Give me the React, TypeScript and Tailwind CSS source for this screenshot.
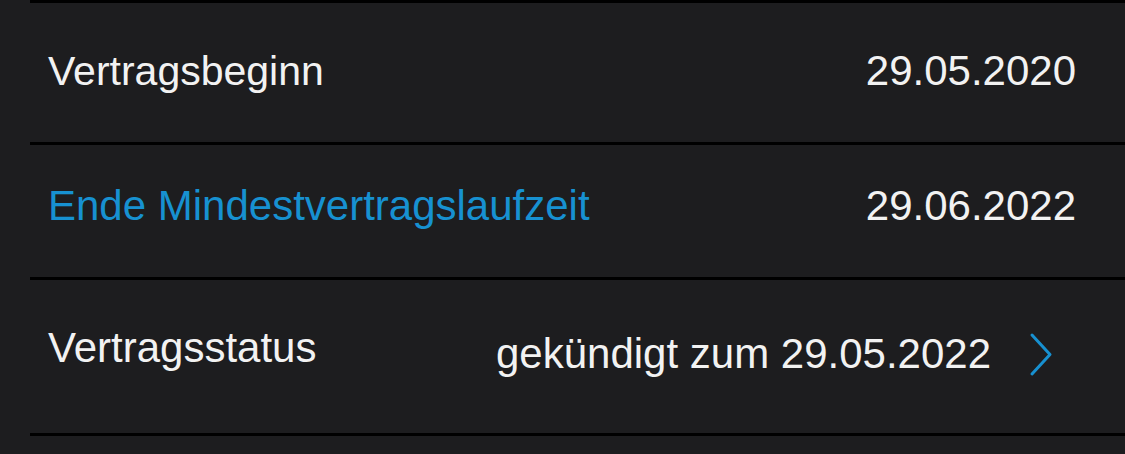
const font = { fontFamily: '"Liberation Sans", Arial, sans-serif' }

function Chevron() {
  return (
    <svg width="24" height="45" viewBox="0 0 24 45" fill="none" className="shrink-0">
      <path d="M3 3 L21 22.5 L3 42" stroke="#1790d0" strokeWidth="3" strokeLinecap="round" strokeLinejoin="round" />
    </svg>
  )
}

export default function App() {
  return (
    <div className="h-[454px] w-[1125px] overflow-hidden bg-[#1d1d1f] pl-[30px]" style={font}>
      <div className="border-t-[3px] border-black text-[42px] leading-[48px] text-[#f2f2f2]">
        <div className="flex h-[142px] items-center justify-between border-b-[3px] border-black pb-[4px] pl-[18px] pr-[49px]">
          <span className="text-[41px]">Vertragsbeginn</span>
          <span>29.05.2020</span>
        </div>
        <div className="flex h-[135px] items-center justify-between border-b-[3px] border-black pb-[10px] pl-[18px] pr-[49px]">
          <span className="text-[#1791d1]">Ende Mindestvertragslaufzeit</span>
          <span>29.06.2022</span>
        </div>
        <div className="flex h-[156px] items-center border-b-[3px] border-black pb-[5px] pl-[18px] pr-[72px]">
          <span className="mb-[12px]">Vertragsstatus</span>
          <span className="ml-auto mr-[38px]">gekündigt zum 29.05.2022</span>
          <Chevron />
        </div>
      </div>
    </div>
  )
}
